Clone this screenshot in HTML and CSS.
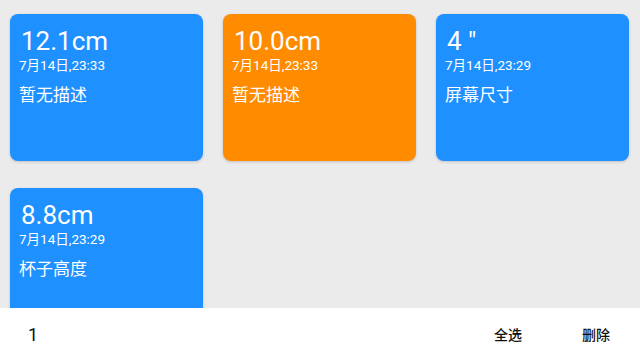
FILE: index.html
```html
<!DOCTYPE html>
<html lang="zh">
<head>
<meta charset="utf-8">
<link rel="stylesheet" href="styles.css">
</head>
<body>
<div class="screen">
  <main class="grid">
    <div class="card blue">
      <div class="value">12.1cm</div>
      <div class="date">7月14日,23:33</div>
      <div class="desc">暂无描述</div>
    </div>
    <div class="card orange">
      <div class="value">10.0cm</div>
      <div class="date">7月14日,23:33</div>
      <div class="desc">暂无描述</div>
    </div>
    <div class="card blue">
      <div class="value">4 "</div>
      <div class="date">7月14日,23:29</div>
      <div class="desc">屏幕尺寸</div>
    </div>
    <div class="card blue">
      <div class="value">8.8cm</div>
      <div class="date">7月14日,23:29</div>
      <div class="desc">杯子高度</div>
    </div>
  </main>
  <footer class="bar">
    <span class="count">1</span>
    <div class="actions">
      <span class="action">全选</span>
      <span class="action">删除</span>
    </div>
  </footer>
</div>
</body>
</html>
```

FILE: styles.css
```css
html, body {
  margin: 0;
  padding: 0;
  width: 640px;
  height: 360px;
  overflow: hidden;
  background: #ebebeb;
  font-family: Roboto, "Noto Sans CJK SC", sans-serif;
}

.screen {
  width: 640px;
  height: 360px;
  display: flex;
  flex-direction: column;
  overflow: hidden;
}

.grid {
  flex: 1;
  min-height: 0;
  overflow: hidden;
  display: grid;
  grid-template-columns: repeat(3, 193px);
  grid-auto-rows: 147px;
  column-gap: 20px;
  row-gap: 27px;
  padding: 14px 10px 0 10px;
}

.card {
  border-radius: 8px;
  color: #fff;
  padding: 12px 9px;
  box-shadow: 0 1px 3px rgba(0, 0, 0, 0.18);
}

.blue { background: #1e90ff; }
.orange { background: #ff8c00; }

.value {
  font-size: 26px;
  line-height: 30px;
  padding-left: 2px;
}

.date {
  font-size: 13.5px;
  line-height: 17px;
  margin-top: 1px;
}

.desc {
  font-size: 17px;
  line-height: 24px;
  margin-top: 9px;
}

.bar {
  height: 52px;
  flex: none;
  background: #fff;
  display: flex;
  align-items: center;
  justify-content: space-between;
  padding: 0 30px 0 28px;
  position: relative;
  z-index: 1;
}

.count {
  font-size: 18px;
  color: #111;
}

.actions {
  display: flex;
  gap: 60px;
}

.action {
  font-size: 14px;
  font-weight: 500;
  color: #111;
}
```
